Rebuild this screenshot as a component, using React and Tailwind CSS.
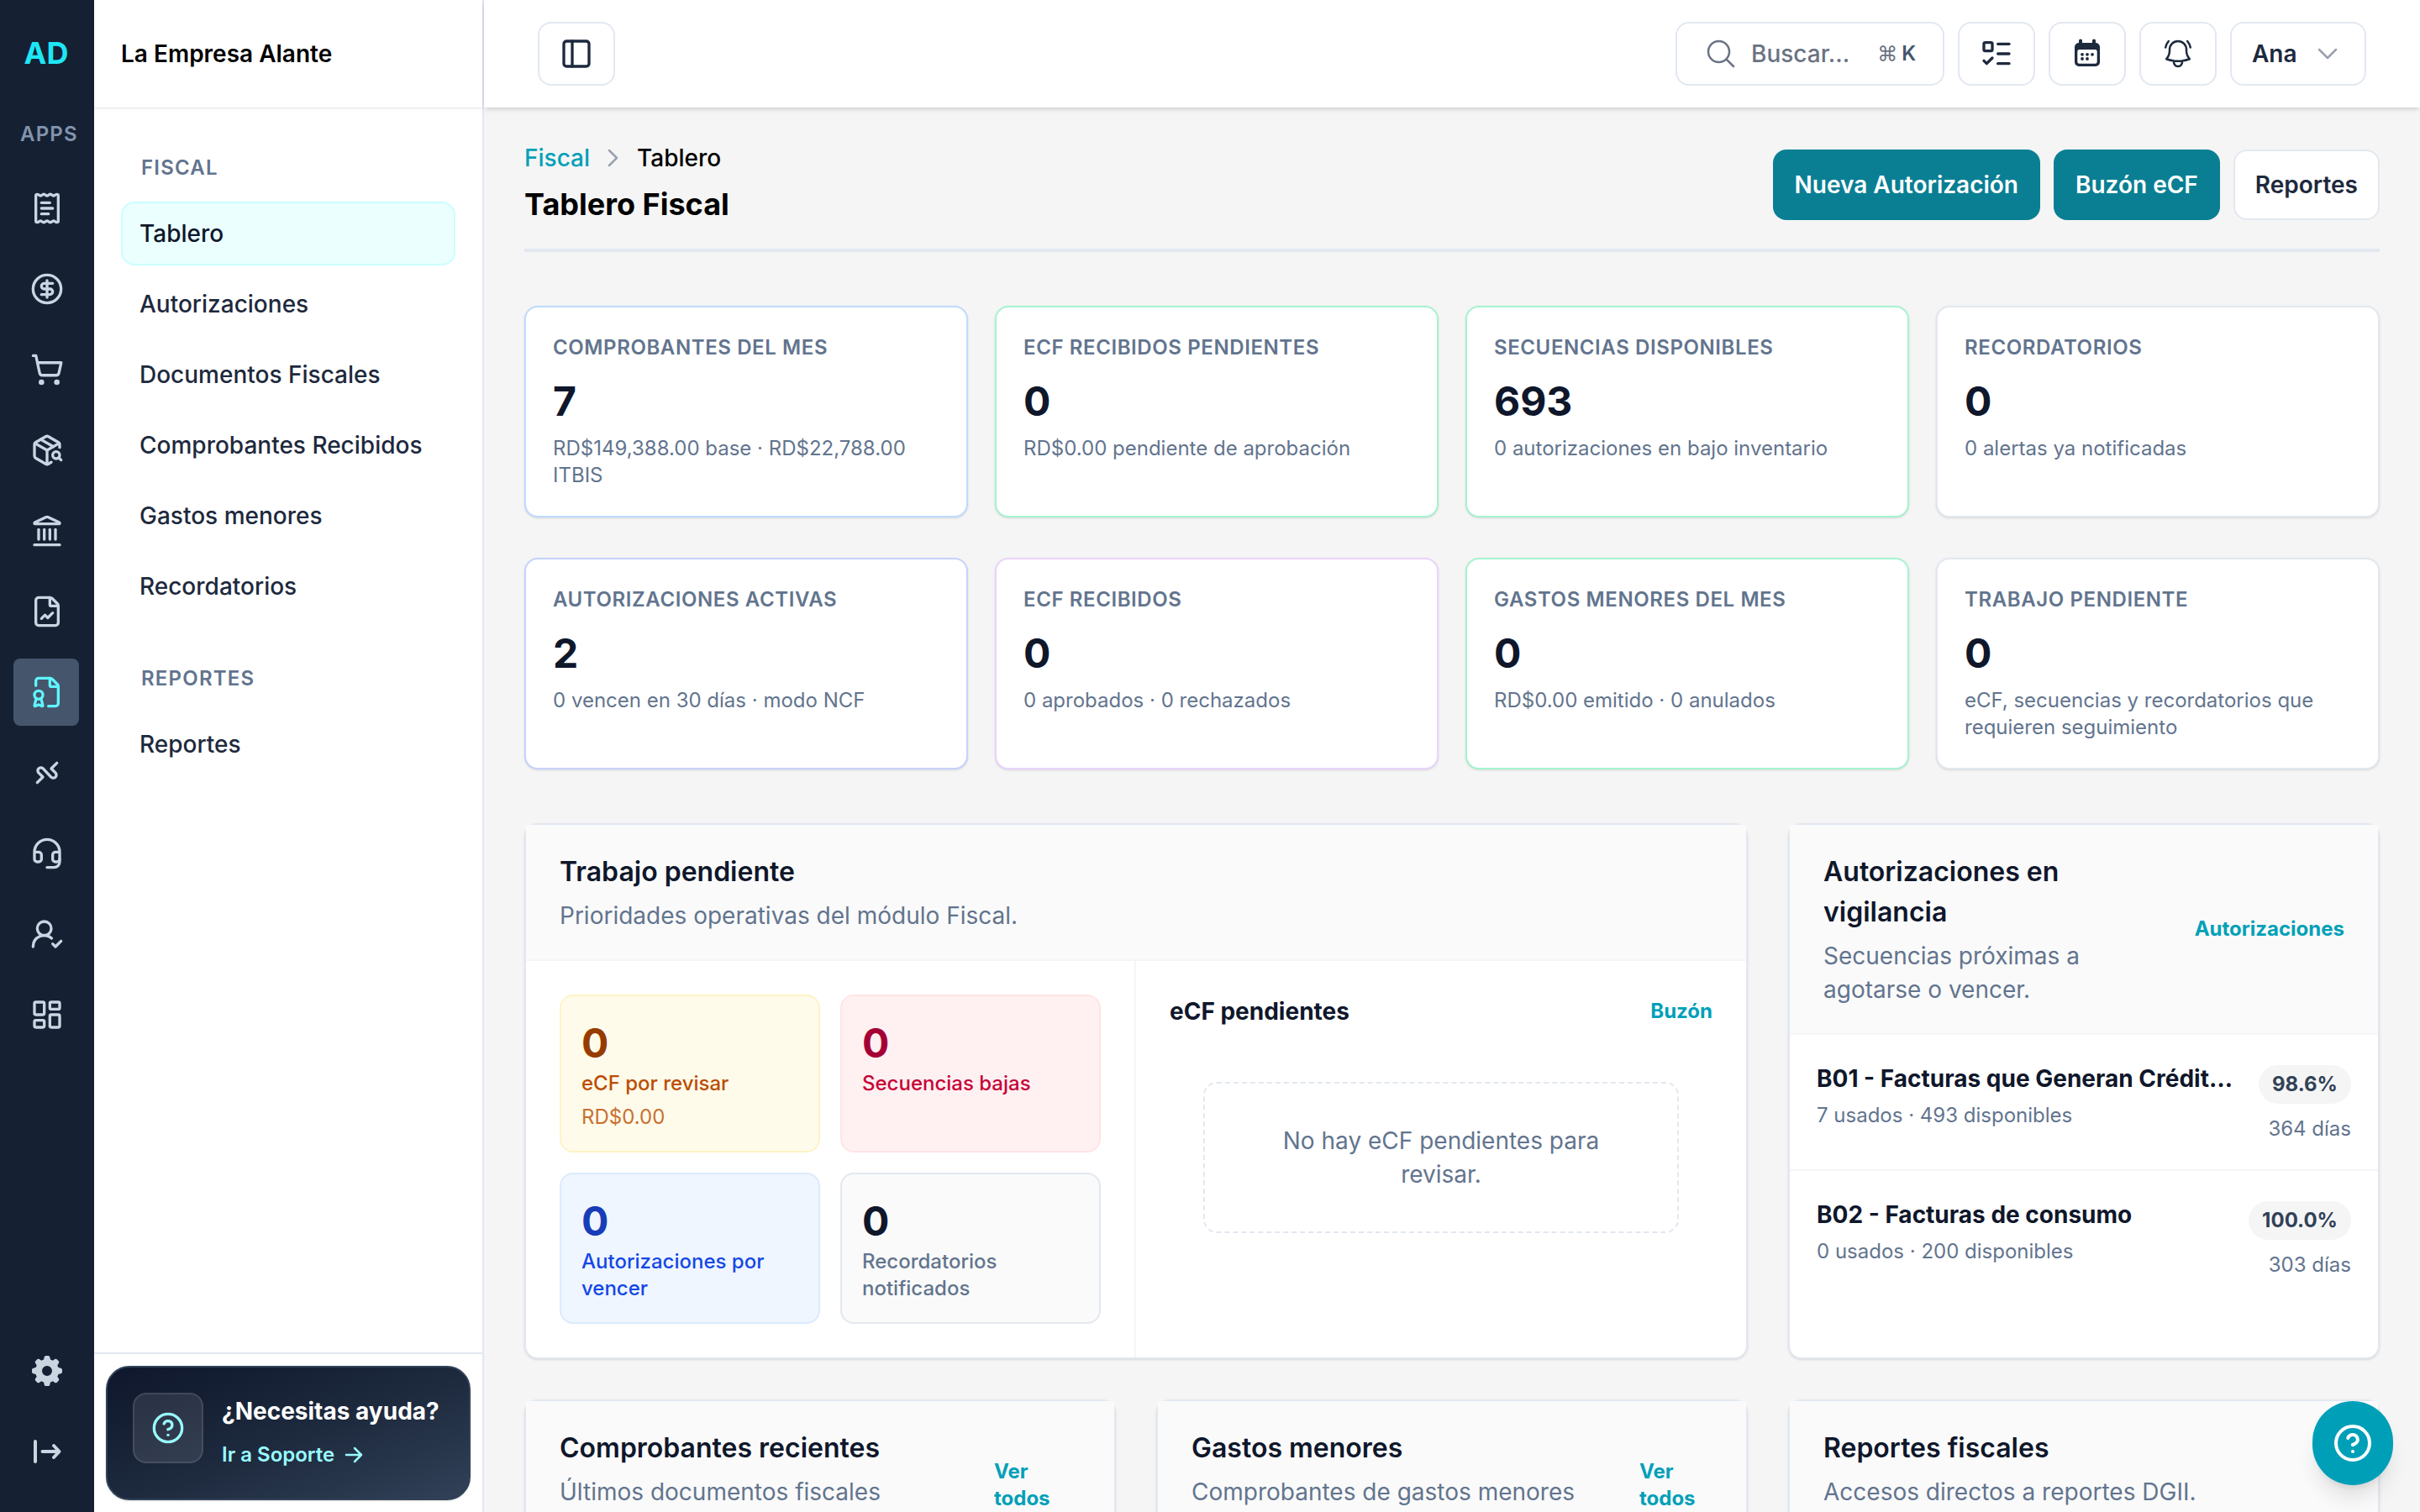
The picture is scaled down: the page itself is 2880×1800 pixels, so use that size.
import {
    ReceiptText,
    CircleDollarSign,
    ShoppingCart,
    PackageSearch,
    Landmark,
    FileChartLine,
    FileBadge,
    Headset,
    UserRoundCheck,
    LayoutDashboard,
    PanelLeft,
    ListTodo,
    CircleQuestionMark,
} from "lucide-react";
import {
    HiOutlineMagnifyingGlass,
    HiOutlineBellAlert,
    HiMiniCog8Tooth,
} from "react-icons/hi2";

const IconoIntegraciones = ({ size = 40 }) => (
    <svg width={size} height={size} viewBox="0 0 24 24" fill="none" stroke="currentColor" strokeWidth="2" strokeLinecap="round" strokeLinejoin="round">
        <path d="M5 19l4-4-3.1-3.1a2.2 2.2 0 0 1 3.1-3.1L15 15.2a2.2 2.2 0 0 0 3.1-3.1L15 9l4-4" />
    </svg>
);

const IconoSalir = () => (
    <svg width="40" height="40" viewBox="0 0 40 40" fill="none" stroke="currentColor" strokeWidth="4" strokeLinecap="round" strokeLinejoin="round">
        <path d="M6 8v24M14.5 20H34M28 13l6.5 7-6.5 7" />
    </svg>
);

const IconoCalendario = () => (
    <svg width="40" height="40" viewBox="0 0 40 40" fill="currentColor">
        <path fillRule="evenodd" d="M12 2.5a2 2 0 0 1 2 2V7h12V4.500a2 2 0 0 1 4 0V7a5 5 0 0 1 5 5v18a5 5 0 0 1-5 5H10a5 5 0 0 1-5-5V12a5 5 0 0 1 5-5V4.500a2 2 0 0 1 2-2ZM10.500 15A2.200 2.200 0 0 0 8.300 17.200V29.500A2.200 2.200 0 0 0 10.500 31.700H29.500A2.200 2.200 0 0 0 31.700 29.500V17.200A2.200 2.200 0 0 0 29.500 15Z" />
        <circle cx="14" cy="20.800" r="1.900" />
        <circle cx="20" cy="20.800" r="1.900" />
        <circle cx="26" cy="20.800" r="1.900" />
        <circle cx="14" cy="26" r="1.900" />
        <circle cx="20" cy="26" r="1.900" />
    </svg>
);

const Chevron = ({ className, d, width, height }) => (
    <svg className={className} width={width} height={height} viewBox={`0 0 ${width} ${height}`} fill="none" stroke="currentColor" strokeWidth="2.5" strokeLinecap="round" strokeLinejoin="round">
        <path d={d} />
    </svg>
);

const apps = [
    { nombre: "Facturación", Icono: ReceiptText },
    { nombre: "Finanzas", Icono: CircleDollarSign },
    { nombre: "Compras", Icono: ShoppingCart },
    { nombre: "Inventario", Icono: PackageSearch },
    { nombre: "Bancos", Icono: Landmark },
    { nombre: "Informes", Icono: FileChartLine },
    { nombre: "Fiscal", Icono: FileBadge, activo: true },
    { nombre: "Integraciones", Icono: IconoIntegraciones },
    { nombre: "Soporte", Icono: Headset },
    { nombre: "Usuarios", Icono: UserRoundCheck },
    { nombre: "Tableros", Icono: LayoutDashboard },
];

const menu = [
    {
        titulo: "FISCAL",
        items: ["Tablero", "Autorizaciones", "Documentos Fiscales", "Comprobantes Recibidos", "Gastos menores", "Recordatorios"],
    },
    { titulo: "REPORTES", items: ["Reportes"] },
];

const indicadores = [
    { titulo: "COMPROBANTES DEL MES", valor: "7", detalle: "RD$149,388.00 base · RD$22,788.00 ITBIS", borde: "border-blue-200" },
    { titulo: "ECF RECIBIDOS PENDIENTES", valor: "0", detalle: "RD$0.00 pendiente de aprobación", borde: "border-emerald-200" },
    { titulo: "SECUENCIAS DISPONIBLES", valor: "693", detalle: "0 autorizaciones en bajo inventario", borde: "border-emerald-200" },
    { titulo: "RECORDATORIOS", valor: "0", detalle: "0 alertas ya notificadas", borde: "border-slate-200" },
    { titulo: "AUTORIZACIONES ACTIVAS", valor: "2", detalle: "0 vencen en 30 días · modo NCF", borde: "border-indigo-200" },
    { titulo: "ECF RECIBIDOS", valor: "0", detalle: "0 aprobados · 0 rechazados", borde: "border-purple-200" },
    { titulo: "GASTOS MENORES DEL MES", valor: "0", detalle: "RD$0.00 emitido · 0 anulados", borde: "border-emerald-200" },
    { titulo: "TRABAJO PENDIENTE", valor: "0", detalle: "eCF, secuencias y recordatorios que requieren seguimiento", borde: "border-slate-200" },
];

const prioridades = [
    { valor: "0", texto: "eCF por revisar", monto: "RD$0.00", caja: "bg-amber-50 border-amber-100", numero: "text-amber-800", color: "text-amber-700" },
    { valor: "0", texto: "Secuencias bajas", caja: "bg-rose-50 border-rose-100", numero: "text-rose-800", color: "text-rose-700" },
    { valor: "0", texto: "Autorizaciones por vencer", caja: "bg-blue-50 border-blue-100", numero: "text-blue-800", color: "text-blue-700" },
    { valor: "0", texto: "Recordatorios notificados", caja: "bg-neutral-50 border-slate-200", numero: "text-slate-900", color: "text-slate-500" },
];

const autorizaciones = [
    { nombre: "B01 - Facturas que Generan Crédit…", uso: "7 usados · 493 disponibles", porcentaje: "98.6%", dias: "364 días" },
    { nombre: "B02 - Facturas de consumo", uso: "0 usados · 200 disponibles", porcentaje: "100.0%", dias: "303 días" },
];

const BarraApps = () => (
    <nav className="flex h-full w-[112px] shrink-0 flex-col bg-[#152033] text-slate-300">
        <div className="flex h-[126px] w-[110px] items-center justify-center text-[36px] font-bold text-[#1ee7f5]">AD</div>
        <div className="pt-[18px] pl-6 text-[24px] leading-8 font-semibold tracking-[0.05em] text-[#8293ad]">APPS</div>
        <div className="mt-8 flex flex-col gap-4 pl-4">
            {apps.map(({ nombre, Icono, activo }) => (
                <a
                    key={nombre}
                    aria-label={nombre}
                    className={`flex h-20 w-[78px] items-center justify-center rounded-lg pl-0.5 ${activo ? "bg-slate-600 text-[#5ff5ff]" : ""}`}
                >
                    <Icono size={40} />
                </a>
            ))}
        </div>
        <div className="mt-auto flex flex-col items-center gap-4 pb-8">
            <a aria-label="Configuración" className="flex h-20 items-center"><HiMiniCog8Tooth size={40} /></a>
            <a aria-label="Salir" className="flex h-20 items-center"><IconoSalir /></a>
        </div>
    </nav>
);

const MenuLateral = () => (
    <aside className="flex h-full w-[464px] shrink-0 flex-col border-r-2 border-slate-200 bg-white">
        <div className="flex h-[128px] shrink-0 items-center pl-8 text-[28px] font-semibold text-black shadow-sm">La Empresa Alante</div>
        <div className="flex flex-col gap-14 px-8 pt-14">
            {menu.map((grupo) => (
                <div key={grupo.titulo}>
                    <h3 className="pl-6 text-[24px] leading-8 font-semibold tracking-[0.05em] text-slate-500">{grupo.titulo}</h3>
                    <ul className="mt-6 flex flex-col gap-2">
                        {grupo.items.map((item) => (
                            <li
                                key={item}
                                className={`flex h-[76px] w-[398px] items-center rounded-2xl border-2 pl-5 text-[28px] font-medium ${item === "Tablero" ? "border-[#cbfdff] bg-[#ebffff] text-slate-900" : "border-transparent text-slate-800"}`}
                            >
                                {item}
                            </li>
                        ))}
                    </ul>
                </div>
            ))}
        </div>
        <div className="mt-auto border-t-2 border-slate-200 px-3.5 pt-3.5 pb-3.5">
            <div className="flex h-[160px] w-[434px] items-start rounded-[28px] border-2 border-slate-700 bg-linear-to-br from-slate-900 via-slate-800 to-slate-700 pt-[30px] pl-[30px] shadow-sm">
                <div className="flex size-[84px] shrink-0 items-center justify-center rounded-2xl border-2 border-white/10 bg-white/10 text-[#99fbff]">
                    <CircleQuestionMark size={40} />
                </div>
                <div className="mt-0.5 ml-5.5">
                    <p className="text-[28px] leading-10 font-bold whitespace-nowrap text-white">¿Necesitas ayuda?</p>
                    <p className="mt-4 flex items-center gap-3 text-[24px] leading-8 font-semibold text-[#99fbff]">
                        Ir a Soporte
                        <Chevron className="shrink-0" width={22} height={20} d="M2 10h18M12 2l8 8-8 8" />
                    </p>
                </div>
            </div>
        </div>
    </aside>
);

const BotonIcono = ({ children, label }) => (
    <button aria-label={label} className="flex h-[76px] w-[92px] items-center justify-center rounded-2xl border-2 border-slate-200 bg-white text-slate-800">
        {children}
    </button>
);

const Encabezado = () => (
    <header className="z-10 flex h-[128px] shrink-0 items-center justify-between bg-white px-16 shadow-md">
        <BotonIcono label="Alternar menú"><PanelLeft size={40} /></BotonIcono>
        <div className="flex gap-4">
            <div className="flex h-[76px] w-[320px] items-center rounded-2xl border-2 border-slate-200 pl-8 text-gray-500">
                <HiOutlineMagnifyingGlass size={40} />
                <span className="ml-4 text-[28px] font-medium">Buscar...</span>
                <span className="ml-auto pr-8 text-[24px]">⌘ <span className="-ml-0.5 font-semibold text-slate-600">K</span></span>
            </div>
            <BotonIcono label="Tareas"><ListTodo size={40} /></BotonIcono>
            <BotonIcono label="Calendario"><IconoCalendario /></BotonIcono>
            <BotonIcono label="Notificaciones"><HiOutlineBellAlert size={40} /></BotonIcono>
            <button className="flex h-[76px] w-[162px] items-center rounded-2xl border-2 border-slate-200 pl-6 text-[28px] font-semibold text-slate-800">
                Ana
                <Chevron className="mr-8 ml-auto text-gray-400" width={24} height={14} d="M2 2l10 10L22 2" />
            </button>
        </div>
    </header>
);

const Titulo = () => (
    <div className="flex items-start justify-between border-b-4 border-slate-200 pb-6">
        <div>
            <div className="flex items-center text-[28px] leading-10 font-medium">
                <span className="text-[#00a0b8]">Fiscal</span>
                <Chevron className="mx-[21px] text-gray-400" width={14} height={22} d="M2 2l9 9-9 9" />
                <span className="text-black">Tablero</span>
            </div>
            <h1 className="mt-[7px] mb-px text-[36px] leading-[56px] font-bold text-black">Tablero Fiscal</h1>
        </div>
        <div className="mt-2.5 flex gap-4 text-[28px] font-semibold">
            <button className="h-[84px] rounded-2xl bg-[#0a7f94] px-[26px] text-white">Nueva Autorización</button>
            <button className="h-[84px] rounded-2xl bg-[#0a7f94] px-[26px] text-white">Buzón eCF</button>
            <button className="h-[84px] rounded-2xl border-2 border-slate-200 bg-white px-6 text-slate-800">Reportes</button>
        </div>
    </div>
);

const Indicador = ({ titulo, valor, detalle, borde }) => (
    <div className={`h-[252px] rounded-2xl border-2 bg-white p-8 shadow-sm ${borde}`}>
        <p className="text-[24px] leading-8 font-semibold tracking-[0.025em] text-slate-500">{titulo}</p>
        <p className="mt-4 text-[48px] leading-16 font-bold text-slate-900">{valor}</p>
        <p className="mt-2 text-[24px] leading-8 text-slate-500">{detalle}</p>
    </div>
);

const Panel = ({ titulo, descripcion, enlace, anchoEnlace = "", className = "", altoTexto = "", children }) => (
    <section className={`rounded-2xl border-2 border-slate-200 bg-white shadow-sm ${className}`}>
        <div className="flex items-center justify-between gap-8 border-b-2 border-neutral-100 bg-neutral-50 px-10 py-8">
            <div className={altoTexto}>
                <h2 className="text-[32px] leading-12 font-semibold text-slate-900">{titulo}</h2>
                <p className="mt-2 text-[28px] leading-10 text-slate-500">{descripcion}</p>
            </div>
            {enlace && <a className={`shrink-0 text-[24px] leading-8 font-bold text-[#00a0b8] ${anchoEnlace}`}>{enlace}</a>}
        </div>
        {children}
    </section>
);

const App = () => {
    return (
        <div className="flex h-[1800px] w-[2880px] overflow-hidden bg-neutral-100 font-['Inter',sans-serif]">
            <BarraApps />
            <MenuLateral />
            <div className="flex min-w-0 flex-1 flex-col">
                <Encabezado />
                <main className="flex flex-col px-12 pt-10">
                    <Titulo />

                    <div className="mt-16 grid grid-cols-4 gap-x-8 gap-y-12">
                        {indicadores.map((ind) => (
                            <Indicador key={ind.titulo} {...ind} />
                        ))}
                    </div>

                    <div className="mt-16 grid grid-cols-3 gap-12">
                        <Panel className="col-span-2" titulo="Trabajo pendiente" descripcion="Prioridades operativas del módulo Fiscal.">
                            <div className="grid grid-cols-2">
                                <div className="grid grid-cols-2 gap-6 border-r-2 border-neutral-100 p-10">
                                    {prioridades.map((p) => (
                                        <div key={p.texto} className={`rounded-2xl border-2 p-6 ${p.caja}`}>
                                            <p className={`text-[48px] leading-16 font-bold ${p.numero}`}>{p.valor}</p>
                                            <p className={`text-[24px] leading-8 font-medium ${p.color}`}>{p.texto}</p>
                                            {p.monto && <p className={`mt-2 text-[24px] leading-8 opacity-80 ${p.color}`}>{p.monto}</p>}
                                        </div>
                                    ))}
                                </div>
                                <div className="p-10">
                                    <div className="flex items-center justify-between">
                                        <h3 className="text-[28px] leading-10 font-bold text-slate-900">eCF pendientes</h3>
                                        <a className="text-[24px] leading-8 font-bold text-[#00a0b8]">Buzón</a>
                                    </div>
                                    <div className="mx-10 mt-16 rounded-2xl border-2 border-dashed border-slate-200 p-12 text-center text-[28px] leading-10 text-slate-500">
                                        No hay eCF pendientes para revisar.
                                    </div>
                                </div>
                            </div>
                        </Panel>

                        <Panel titulo="Autorizaciones en vigilancia" descripcion="Secuencias próximas a agotarse o vencer." enlace="Autorizaciones">
                            <div className="divide-y-2 divide-neutral-100">
                                {autorizaciones.map((a) => (
                                    <div key={a.nombre} className="flex gap-8 p-8">
                                        <div className="min-w-0 flex-1">
                                            <p className="text-[28px] leading-10 font-bold whitespace-nowrap text-slate-900">{a.nombre}</p>
                                            <p className="mt-2 text-[24px] leading-8 text-slate-500">{a.uso}</p>
                                        </div>
                                        <div className="flex flex-col items-end">
                                            <span className="mt-1 flex h-[46px] items-center rounded-full bg-neutral-100 px-4 text-[24px] font-bold text-slate-700">{a.porcentaje}</span>
                                            <span className="mt-3.5 text-[24px] leading-8 text-slate-500">{a.dias}</span>
                                        </div>
                                    </div>
                                ))}
                            </div>
                        </Panel>

                        <Panel titulo="Comprobantes recientes" descripcion="Últimos documentos fiscales" enlace="Ver todos" anchoEnlace="w-[103px]" altoTexto="h-[136px]" />
                        <Panel titulo="Gastos menores" descripcion="Comprobantes de gastos menores" enlace="Ver todos" anchoEnlace="w-[87px]" altoTexto="h-[136px]" />
                        <Panel titulo="Reportes fiscales" descripcion="Accesos directos a reportes DGII." altoTexto="h-[136px]" />
                    </div>
                </main>
            </div>

            {/* Botón flotante de ayuda */}
            <button aria-label="Ayuda" className="fixed right-8 bottom-8 z-20 flex h-[100px] w-24 items-center justify-center rounded-full bg-[#009fb8] text-white shadow-xl">
                <CircleQuestionMark size={48} />
            </button>
        </div>
    );
};

export default App;
